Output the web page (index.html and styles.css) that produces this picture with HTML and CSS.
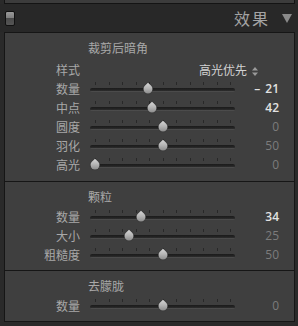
FILE: index.html
```html
<!DOCTYPE html>
<html lang="zh-CN">
<head>
    <meta charset="UTF-8">
    <title>效果</title>
    <link rel="stylesheet" href="styles.css">
</head>
<body>
    <div class="prev"></div>
    <div class="header">
        <span class="toggle"></span>
        <span class="header-title">效果</span>
        <span class="header-arrow"></span>
    </div>
    <div class="panel">
        <section class="group group-vignette">
            <div class="group-title">裁剪后暗角</div>
            <div class="row row-style">
                <span class="label">样式</span>
                <span class="select">高光优先<svg class="updown" width="6" height="9" viewBox="0 0 6 9"><path d="M3 0 L6 3.5 H0 Z M3 9 L0 5.5 H6 Z" fill="#9a9a9a"/></svg></span>
            </div>
            <div class="row"><span class="label">数量</span><div class="slider"><span class="thumb" style="--p:0.395"></span></div><span class="value active">–&nbsp;21</span></div>
            <div class="row"><span class="label">中点</span><div class="slider"><span class="thumb" style="--p:0.42"></span></div><span class="value active">42</span></div>
            <div class="row"><span class="label">圆度</span><div class="slider"><span class="thumb" style="--p:0.5"></span></div><span class="value">0</span></div>
            <div class="row"><span class="label">羽化</span><div class="slider"><span class="thumb" style="--p:0.5"></span></div><span class="value">50</span></div>
            <div class="row"><span class="label">高光</span><div class="slider"><span class="thumb" style="--p:0"></span></div><span class="value">0</span></div>
        </section>
        <section class="group group-grain">
            <div class="group-title">颗粒</div>
            <div class="row"><span class="label">数量</span><div class="slider"><span class="thumb" style="--p:0.34"></span></div><span class="value active">34</span></div>
            <div class="row"><span class="label">大小</span><div class="slider"><span class="thumb" style="--p:0.25"></span></div><span class="value">25</span></div>
            <div class="row"><span class="label">粗糙度</span><div class="slider"><span class="thumb" style="--p:0.5"></span></div><span class="value">50</span></div>
        </section>
        <section class="group group-dehaze">
            <div class="group-title">去朦胧</div>
            <div class="row"><span class="label">数量</span><div class="slider"><span class="thumb" style="--p:0.5"></span></div><span class="value">0</span></div>
        </section>
    </div>
</body>
</html>
```

FILE: styles.css
```css
body {
    margin: 0;
    width: 298px;
    height: 326px;
    overflow: hidden;
    background-color: #2a2a2a;
    font-family: "Noto Sans CJK SC", "Noto Sans", sans-serif;
    font-size: 12px;
    color: #a8a8a8;
}

/* bottom edge of the panel above */
.prev {
    margin-left: 4px;
    width: 289px;
    height: 3px;
    background-color: #3c3c3c;
    border: 1px solid #141414;
    border-top: none;
}

.header {
    display: flex;
    align-items: center;
    height: 28px;
    padding-left: 5px;
    background-color: #282828;
}
.toggle {
    width: 8px;
    height: 13px;
    border: 1px solid #111;
    border-radius: 2px;
    background: linear-gradient(#9a9a9a, #7c7c7c 50%, #4a4a4a 50%, #555);
}
.header-title {
    margin-left: auto;
    font-size: 16px;
    color: #a4a4a4;
    letter-spacing: 2px;
    line-height: 28px;
}
.header-arrow {
    width: 0;
    height: 0;
    margin: 1px 6px 0 12px;
    border-left: 5px solid transparent;
    border-right: 5px solid transparent;
    border-top: 9px solid #8a8a8a;
}

.panel {
    margin-left: 4px;
    width: 289px;
    background-color: #3f3f3f;
    border: 1px solid #161616;
}
.group {
    padding: 5px 15px 6px 0;
}
.group + .group {
    border-top: 1px solid #161616;
}
.group-vignette {
    padding-bottom: 7px;
}
.group-title {
    height: 19px;
    line-height: 19px;
    padding-left: 83px;
    margin-bottom: 1px;
}
.group-vignette .group-title {
    margin-bottom: 3px;
}

.row {
    display: grid;
    grid-template-columns: 84px 146px 1fr;
    align-items: center;
    height: 19px;
}
.label {
    padding-right: 9px;
    text-align: right;
    line-height: 19px;
}
.select {
    grid-column: 2 / span 2;
    justify-self: end;
    margin-right: 21px;
    color: #d2d2d2;
    line-height: 19px;
}
.updown {
    margin-left: 5px;
    vertical-align: -1px;
}

.slider {
    position: relative;
    height: 19px;
}
/* tick marks */
.slider::before {
    content: "";
    position: absolute;
    left: 6px;
    top: 3px;
    width: 137px;
    height: 3px;
    background: repeating-linear-gradient(to right, #282828 0 1px, transparent 1px 13.5px);
}
/* groove */
.slider::after {
    content: "";
    position: absolute;
    left: 1px;
    right: 0;
    top: 9px;
    height: 4px;
    border-radius: 2px;
    background: linear-gradient(#1b1b1b, #262626 60%, #5c5c5c);
}
.thumb {
    position: absolute;
    z-index: 1;
    left: calc(6px + var(--p) * 135px);
    top: 10px;
    width: 9px;
    height: 9px;
    border-radius: 0 50% 50% 50%;
    background: linear-gradient(135deg, #d6d6d6, #b4b4b4 45%, #7e7e7e);
    box-shadow: 0 0 1px #222;
    transform: translate(-50%, -50%) rotate(45deg);
}

.value {
    text-align: right;
    font-family: "Open Sans", "Liberation Sans", sans-serif;
    font-size: 12px;
    color: #7c7c7c;
    line-height: 19px;
    word-spacing: 2px;
}
.value.active {
    color: #e2e2e2;
    font-weight: 600;
}
```
